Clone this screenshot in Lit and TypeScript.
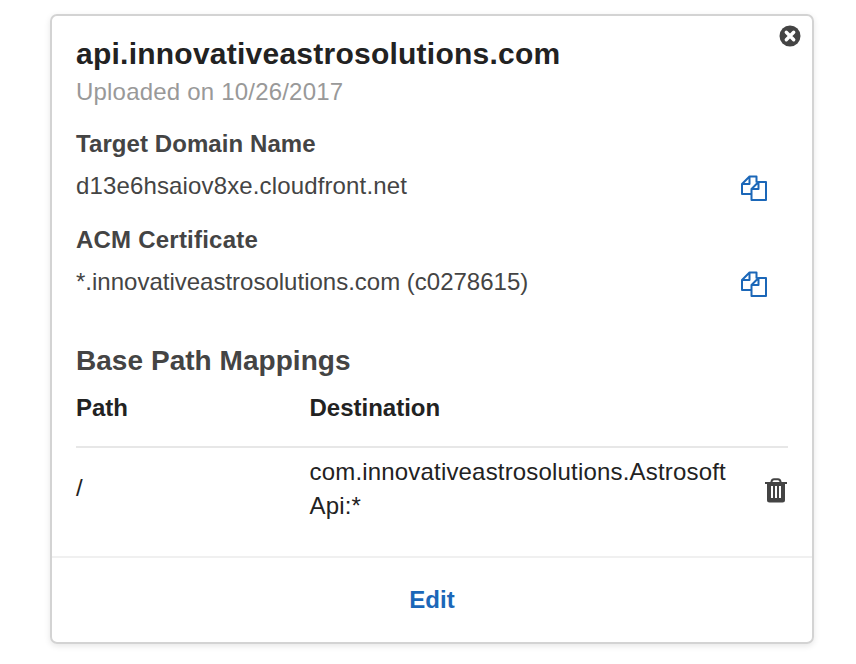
import { LitElement, html, css } from "lit";
import { customElement } from "lit/decorators.js";

const copyIcon = html`<svg class="copy" width="26" height="26" viewBox="0 0 26 26" fill="none" stroke="#1b67b8" stroke-width="2" stroke-linejoin="round">
  <path d="M10 19H1V9L8.500 1.500H15.500V7.500M8.500 1.500V9H1M17.500 7H25V25H10.500V14L17.500 7V14H10.500"/></svg>`;

@customElement("app-root")
export class AppRoot extends LitElement {
  static styles = css`
    :host { display: block; height: 664px; box-sizing: border-box; padding: 14px 42px 20px 50px; background: #fff;
      font-family: "Liberation Sans", Arial, sans-serif; font-size: 24px; line-height: 34px; color: #444; white-space: nowrap; overflow: hidden; }
    .card { box-sizing: border-box; width: 764px; height: 630px; border: 2px solid #d3d3d3; border-radius: 7px; box-shadow: 0 2px 6px #0000001a; position: relative; display: flex; flex-direction: column; }
    .body { padding: 18px 24px 0; height: 540px; box-sizing: border-box; }
    .footer { border-top: 2px solid #f0f0f0; flex: 1; display: flex; justify-content: center; align-items: center; font-weight: bold; color: #1b67b8; }
    h1, h2, h3 { margin: 0; }
    h1 { font-size: 30px; line-height: 40px; color: #222; letter-spacing: 0.24px; }
    .sub { color: #999; margin-top: 1px; letter-spacing: 0.2px; }
    h3 { font-size: 24px; line-height: 34px; margin-top: 18px; letter-spacing: 0.08px; }
    .acm { margin-top: 20px; letter-spacing: 0.22px; }
    .row { display: flex; justify-content: space-between; height: 34px; margin-top: 8px; padding-right: 21px; }
    .domain { letter-spacing: 0.14px; }
    .copy { margin-top: 6px; overflow: visible; }
    h2 { font-size: 28px; line-height: 36px; margin-top: 44px; letter-spacing: 0.04px; }
    .head, .entry { display: grid; grid-template-columns: 233.5px 1fr 23px; color: #222; }
    .head { font-weight: bold; height: 69px; padding-top: 12px; border-bottom: 2px solid #e7e7e7; box-sizing: border-box; }
    .entry { align-items: center; padding-top: 7px; letter-spacing: 0.18px; }
    .path { padding-bottom: 3px; }
    .trash { margin-top: 3px; }
    .close { position: absolute; top: 9px; right: 11px; }
  `;
  render() {
    return html`<div class="card">
      <svg class="close" width="22" height="22" viewBox="0 0 22 22"><circle cx="11" cy="11" r="10.500" fill="#444"/><path d="M7.300 7.300l7.400 7.400M14.700 7.300l-7.400 7.400" stroke="#fff" stroke-width="3.400" stroke-linecap="round"/></svg>
      <div class="body">
        <h1><span>api.innovativeastrosolutions.com</span></h1>
        <div class="sub"><span>Uploaded on 10/26/2017</span></div>
        <h3><span>Target Domain Name</span></h3>
        <div class="row domain"><span>d13e6hsaiov8xe.cloudfront.net</span>${copyIcon}</div>
        <h3 class="acm"><span>ACM Certificate</span></h3>
        <div class="row"><span>*.innovativeastrosolutions.com (c0278615)</span>${copyIcon}</div>
        <h2><span>Base Path Mappings</span></h2>
        <div class="head"><span>Path</span><span>Destination</span></div>
        <div class="entry"><span class="path">/</span><span>com.innovativeastrosolutions.Astrosoft<br>Api:*</span>
          <svg class="trash" width="22" height="25" viewBox="0 0 22 25"><path d="M6.500 5V3.500Q7 1.200 9 1.200H13Q15 1.200 15.500 3.500V5" fill="none" stroke="#444" stroke-width="2"/><path fill="#444" fill-rule="evenodd" d="M0 4H22V6H20V22Q20 24.500 17.500 24.500H4.500Q2 24.500 2 22V6H0ZM6 8V20H8V8ZM10 8V20H12V8ZM14 8V20H16V8Z"/></svg></div>
      </div>
      <div class="footer"><span>Edit</span></div>
    </div>`;
  }
}
